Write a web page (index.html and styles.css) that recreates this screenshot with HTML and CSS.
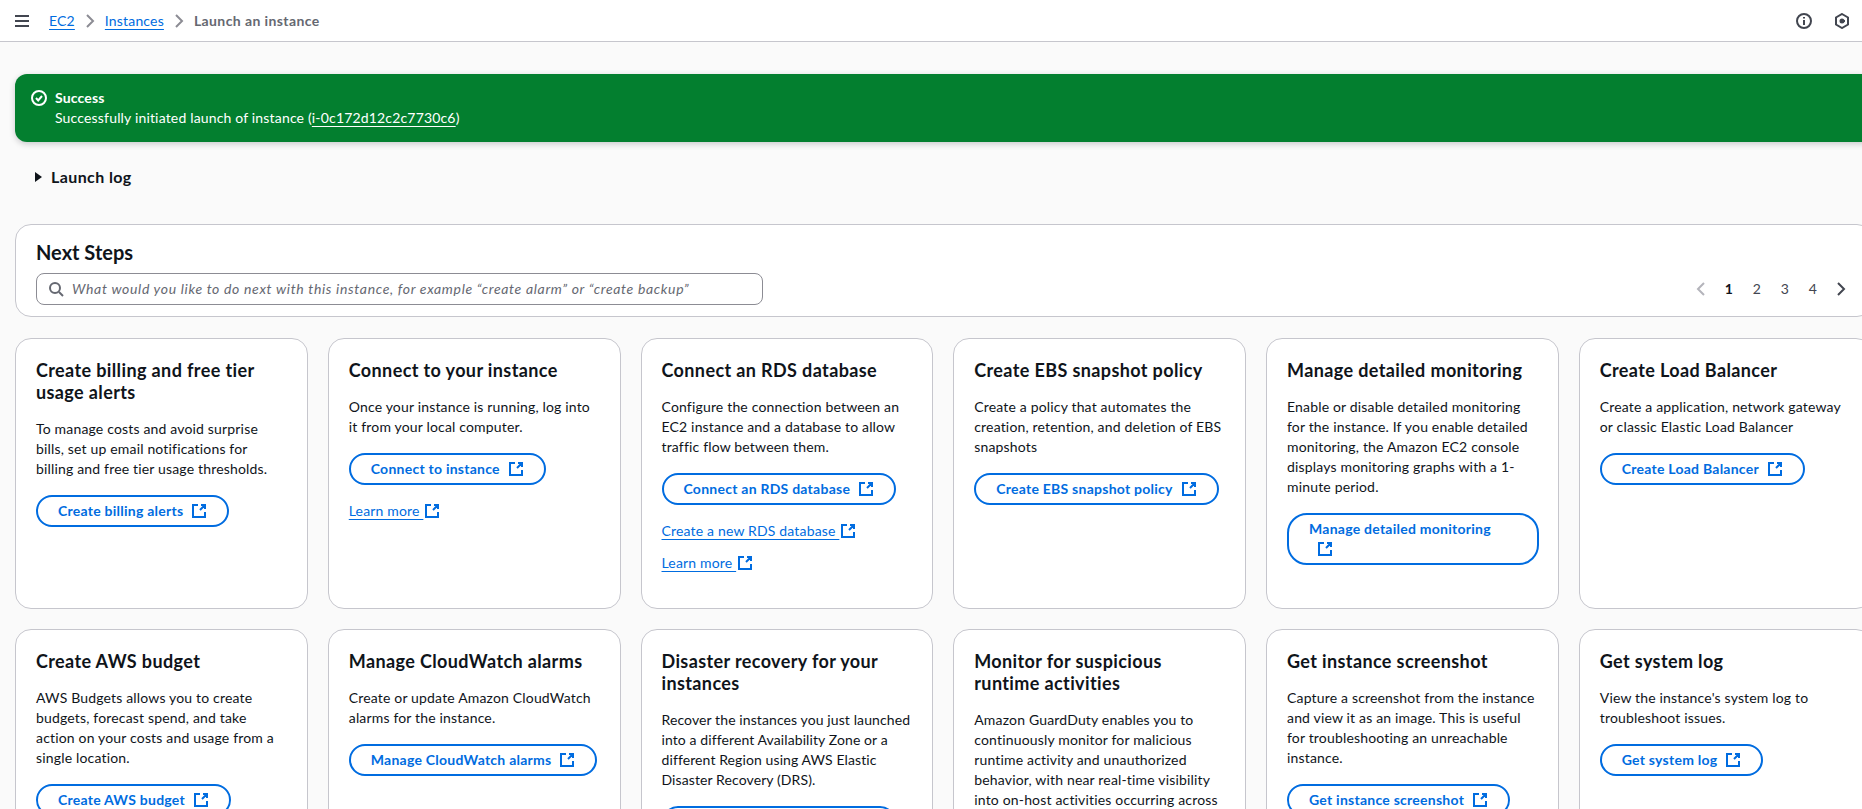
FILE: index.html
```html
<!DOCTYPE html>
<html lang="en">
<head>
  <meta charset="UTF-8">
  <title>Launch an instance | EC2</title>
  <link rel="stylesheet" href="styles.css">
</head>
<body>
  <svg class="sprite" width="0" height="0">
    <symbol id="ext" viewBox="0 0 16 16"><path d="M7 2H2v12h12V9M10 2h4v4M14 2L9 7"/></symbol>
  </svg>

  <header class="topbar">
    <svg class="icon menu" viewBox="0 0 16 16"><path d="M1 3h14M1 8h14M1 13h14"/></svg>
    <nav class="crumbs">
      <a href="#">EC2</a>
      <svg class="chev" viewBox="0 0 16 16"><path d="M5 2l6 6-6 6"/></svg>
      <a href="#">Instances</a>
      <svg class="chev" viewBox="0 0 16 16"><path d="M5 2l6 6-6 6"/></svg>
      <span class="current">Launch an instance</span>
    </nav>
    <div class="top-icons">
      <svg class="icon" viewBox="0 0 16 16"><circle cx="8" cy="8" r="7"/><path d="M8 7v5M8 4v1.6"/></svg>
      <svg class="icon" viewBox="0 0 16 16"><path d="M8 1l6 3.5v7L8 15l-6-3.5v-7z"/><circle class="dot" cx="8" cy="8" r="1.5"/><path d="M8 8h3"/></svg>
    </div>
  </header>

  <main class="content">
    <div class="flash">
      <svg class="icon" viewBox="0 0 16 16"><circle cx="8" cy="8" r="7"/><path d="M5 8l2.2 2.4L11 6"/></svg>
      <div>
        <div class="flash-title">Success</div>
        <div>Successfully initiated launch of instance (<a href="#">i-0c172d12c2c7730c6</a>)</div>
      </div>
    </div>

    <div class="log-toggle"><span class="caret"></span>Launch log</div>

    <section class="next-steps">
      <h2>Next Steps</h2>
      <div class="search-row">
        <div class="search">
          <svg class="icon" viewBox="0 0 16 16"><circle cx="7" cy="7" r="5"/><path d="M11 11l4 4"/></svg>
          <span>What would you like to do next with this instance, for example “create alarm” or “create backup”</span>
        </div>
        <div class="pager">
          <span class="page off"><svg class="icon" viewBox="0 0 16 16"><path d="M11 2L5 8l6 6"/></svg></span>
          <span class="page now">1</span>
          <span class="page">2</span>
          <span class="page">3</span>
          <span class="page">4</span>
          <span class="page"><svg class="icon" viewBox="0 0 16 16"><path d="M5 2l6 6-6 6"/></svg></span>
        </div>
      </div>
    </section>

    <section class="cards">
      <article class="card">
        <h3>Create billing and free tier usage alerts</h3>
        <p>To manage costs and avoid surprise bills, set up email notifications for billing and free tier usage thresholds.</p>
        <a class="btn" href="#">Create billing alerts<svg class="ext"><use href="#ext"/></svg></a>
      </article>
      <article class="card">
        <h3>Connect to your instance</h3>
        <p>Once your instance is running, log into it from your local computer.</p>
        <a class="btn" href="#">Connect to instance<svg class="ext"><use href="#ext"/></svg></a>
        <a class="link" href="#"><u>Learn more&nbsp;</u><svg class="ext"><use href="#ext"/></svg></a>
      </article>
      <article class="card">
        <h3>Connect an RDS database</h3>
        <p>Configure the connection between an EC2 instance and a database to allow traffic flow between them.</p>
        <a class="btn" href="#">Connect an RDS database<svg class="ext"><use href="#ext"/></svg></a>
        <a class="link" href="#"><u>Create a new RDS database&nbsp;</u><svg class="ext"><use href="#ext"/></svg></a>
        <a class="link" href="#"><u>Learn more&nbsp;</u><svg class="ext"><use href="#ext"/></svg></a>
      </article>
      <article class="card">
        <h3>Create EBS snapshot policy</h3>
        <p>Create a policy that automates the creation, retention, and deletion of EBS snapshots</p>
        <a class="btn" href="#">Create EBS snapshot policy<svg class="ext"><use href="#ext"/></svg></a>
      </article>
      <article class="card">
        <h3>Manage detailed monitoring</h3>
        <p>Enable or disable detailed monitoring for the instance. If you enable detailed monitoring, the Amazon EC2 console displays monitoring graphs with a 1-minute period.</p>
        <a class="btn wrapped" href="#">Manage detailed monitoring<br><svg class="ext"><use href="#ext"/></svg></a>
      </article>
      <article class="card">
        <h3>Create Load Balancer</h3>
        <p>Create a application, network gateway or classic Elastic Load Balancer</p>
        <a class="btn" href="#">Create Load Balancer<svg class="ext"><use href="#ext"/></svg></a>
      </article>

      <article class="card">
        <h3>Create AWS budget</h3>
        <p>AWS Budgets allows you to create budgets, forecast spend, and take action on your costs and usage from a single location.</p>
        <a class="btn" href="#">Create AWS budget<svg class="ext"><use href="#ext"/></svg></a>
      </article>
      <article class="card">
        <h3>Manage CloudWatch alarms</h3>
        <p>Create or update Amazon CloudWatch alarms for the instance.</p>
        <a class="btn" href="#">Manage CloudWatch alarms<svg class="ext"><use href="#ext"/></svg></a>
      </article>
      <article class="card">
        <h3>Disaster recovery for your instances</h3>
        <p class="tight">Recover the instances you just launched into a different Availability Zone or a different Region using AWS Elastic Disaster Recovery (DRS).</p>
        <a class="btn cut-off" href="#"></a>
      </article>
      <article class="card">
        <h3>Monitor for suspicious runtime activities</h3>
        <p>Amazon GuardDuty enables you to continuously monitor for malicious runtime activity and unauthorized behavior, with near real-time visibility into on-host activities occurring across</p>
      </article>
      <article class="card">
        <h3>Get instance screenshot</h3>
        <p>Capture a screenshot from the instance and view it as an image. This is useful for troubleshooting an unreachable instance.</p>
        <a class="btn" href="#">Get instance screenshot<svg class="ext"><use href="#ext"/></svg></a>
      </article>
      <article class="card">
        <h3>Get system log</h3>
        <p>View the instance's system log to troubleshoot issues.</p>
        <a class="btn" href="#">Get system log<svg class="ext"><use href="#ext"/></svg></a>
      </article>
    </section>
  </main>
</body>
</html>
```

FILE: styles.css
```css
html, body {
  margin: 0;
  height: 809px;
  overflow: hidden;
}
body {
  font-family: "Lato", "Noto Sans", sans-serif;
  font-size: 14px;
  line-height: 20px;
  letter-spacing: 0.17px;
  color: #0f141a;
  background: #fafafa;
}
.sprite {
  position: absolute;
}
svg {
  fill: none;
  stroke: currentColor;
  stroke-width: 2;
}
.icon {
  width: 16px;
  height: 16px;
  flex: none;
}

/* top bar */
.topbar {
  display: flex;
  align-items: center;
  height: 41px;
  padding: 0 12px 0 14px;
  background: #fff;
  border-bottom: 1px solid #c6c6cd;
}
.menu {
  color: #424650;
  margin-right: 19px;
}
.crumbs {
  display: flex;
  align-items: center;
  gap: 7px;
}
.crumbs a {
  color: #006ce0;
  text-decoration: underline 1px;
  text-underline-offset: 3px;
}
.crumbs .chev {
  width: 16px;
  height: 16px;
  color: #8c8c94;
}
.current {
  color: #656871;
  font-weight: 700;
  letter-spacing: 0.4px;
}
.top-icons {
  display: flex;
  gap: 22px;
  margin-left: auto;
  color: #424650;
}
.dot {
  fill: currentColor;
}

/* main column runs past the right edge of the window */
.content {
  width: 1858px;
  margin-left: 15px;
  padding-top: 32px;
}
.flash {
  display: flex;
  gap: 8px;
  height: 68px;
  box-sizing: border-box;
  padding: 14px 16px;
  background: #037f2f;
  color: #fff;
  border-radius: 12px;
  box-shadow: 0 2px 6px rgba(0, 7, 22, 0.2);
}
.flash .icon {
  margin-top: 2px;
}
.flash-title {
  font-weight: 700;
}
.flash a {
  color: #fff;
  text-decoration: underline 1px;
  text-underline-offset: 3px;
}
.log-toggle {
  display: flex;
  align-items: center;
  gap: 9px;
  margin: 25px 0 37px 20px;
  font-size: 16px;
  font-weight: 700;
  letter-spacing: 0.4px;
}
.caret {
  width: 0;
  height: 0;
  border-left: 7px solid #0f141a;
  border-top: 5px solid transparent;
  border-bottom: 5px solid transparent;
}

/* next steps */
.next-steps {
  box-sizing: border-box;
  height: 93px;
  padding: 15px 20px;
  background: #fff;
  border: 1px solid #c6c6cd;
  border-radius: 16px;
}
.next-steps h2 {
  margin: 0 0 9px;
  font-size: 20px;
  line-height: 24px;
  font-weight: 700;
  letter-spacing: 0;
}
.search-row {
  display: flex;
  align-items: center;
  justify-content: space-between;
}
.search {
  display: flex;
  align-items: center;
  gap: 8px;
  width: 727px;
  height: 32px;
  box-sizing: border-box;
  padding: 0 11px;
  border: 1px solid #8c8c94;
  border-radius: 8px;
  color: #656871;
  font-style: italic;
  letter-spacing: 0.67px;
}
.pager {
  display: flex;
  align-items: center;
  color: #424650;
  margin-right: -3px;
}
.page {
  display: flex;
  justify-content: center;
  width: 28px;
}
.page.now {
  color: #0f141a;
  font-weight: 700;
}
.page.off {
  color: #b4b4bb;
}

/* cards */
.cards {
  display: grid;
  grid-template-columns: repeat(6, 292.75px);
  grid-auto-rows: 271px;
  gap: 20px;
  margin-top: 21px;
}
.card {
  box-sizing: border-box;
  padding: 20px;
  background: #fff;
  border: 1px solid #c6c6cd;
  border-radius: 16px;
}
.card h3 {
  margin: 0 0 16px;
  font-size: 18px;
  line-height: 22px;
  font-weight: 700;
  letter-spacing: 0.38px;
}
.card p {
  margin: 0 0 16px;
}
.card p.tight {
  letter-spacing: 0.1px;
}
.btn {
  display: inline-block;
  box-sizing: border-box;
  padding: 4px 20px;
  border: 2px solid #006ce0;
  border-radius: 20px;
  color: #006ce0;
  font-weight: 700;
  letter-spacing: 0.25px;
  text-decoration: none;
  white-space: nowrap;
}
.btn.wrapped {
  width: 252px;
}
.btn.cut-off {
  display: block;
  width: 234px;
  height: 32px;
}
.link {
  display: block;
  margin-top: 12px;
  color: #006ce0;
  text-decoration: none;
}
.btn + .link {
  margin-top: 16px;
}
.link u {
  text-decoration-thickness: 1px;
  text-underline-offset: 3px;
}
.link .ext {
  margin-left: 1px;
}
.ext {
  width: 16px;
  height: 16px;
  margin-left: 8px;
  vertical-align: -3px;
  color: #006ce0;
}
```
